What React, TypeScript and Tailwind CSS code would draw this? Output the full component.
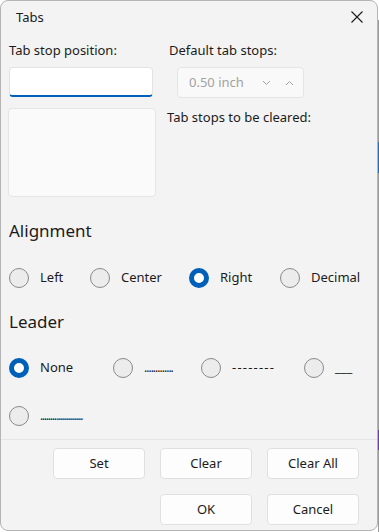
import React from "react";

function Radio({ checked }: { checked?: boolean }) {
  return checked ? (
    <span className="inline-block h-[20px] w-[20px] shrink-0 rounded-full border-[5px] border-[#005fb8] bg-white" />
  ) : (
    <span className="inline-block h-[20px] w-[20px] shrink-0 rounded-full border border-[#8a8a8a] bg-[#ececec]" />
  );
}

function Option({
  label,
  checked,
  className = "",
}: {
  label: React.ReactNode;
  checked?: boolean;
  className?: string;
}) {
  return (
    <div className={`flex items-center ${className}`}>
      <Radio checked={checked} />
      <span className="ml-[11px] text-[13px] text-[#1b1b1b]">{label}</span>
    </div>
  );
}

function Btn({ children }: { children: React.ReactNode }) {
  return (
    <button
      type="button"
      className="h-[31px] w-[92px] rounded-[4px] border border-[#e0e0e0] bg-[#fdfdfd] text-[13px] text-[#1b1b1b]"
    >
      {children}
    </button>
  );
}

export default function App() {
  return (
    <div className="flex h-[532px] w-[379px] bg-white font-['Segoe_UI','Noto_Sans',sans-serif]">
      <div className="flex h-[531px] w-[378px] flex-col overflow-hidden rounded-[8px] border border-[#b4b4b4] bg-[#f3f3f3]">
        {/* title bar */}
        <div className="flex h-[34px] shrink-0 items-center justify-between pl-[15px] pr-[14px]">
          <span className="text-[13px] text-[#1b1b1b]">Tabs</span>
          <svg width="12" height="12" viewBox="0 0 12 12" className="-mt-[3px]">
            <path d="M0.5 0.5 L11.5 11.5 M11.5 0.5 L0.5 11.5" stroke="#1b1b1b" strokeWidth="1.1" />
          </svg>
        </div>

        {/* top fields */}
        <div className="flex px-[7px] pt-[6px]">
          <div className="flex w-[158px] flex-col">
            <span className="pl-[1px] text-[13px] leading-[18px] text-[#1b1b1b]">Tab stop position:</span>
            <div className="ml-[1px] mt-[8px] h-[30px] w-[144px] rounded-[4px] border border-[#e3e3e3] border-b-2 border-b-[#005fb8] bg-white" />
            <div className="mt-[11px] h-[89px] w-[148px] rounded-[4px] border border-[#e5e5e5] bg-[#fafafa]" />
          </div>
          <div className="flex flex-col pl-[3px]">
            <span className="text-[13px] leading-[18px] text-[#1b1b1b]">Default tab stops:</span>
            <div className="ml-[8px] mt-[8px] flex h-[31px] w-[127px] items-center rounded-[4px] border border-[#e5e5e5] bg-[#f9f9f9] pl-[11px] pr-[9px]">
              <span className="flex-1 text-[13px] text-[#a2a2a2]">0.50 inch</span>
              <svg width="9" height="6" viewBox="0 0 9 6" className="mr-[14px]">
                <path d="M1 1 L4.5 4.5 L8 1" stroke="#a2a2a2" fill="none" strokeWidth="1" />
              </svg>
              <svg width="9" height="6" viewBox="0 0 9 6">
                <path d="M1 5 L4.5 1.5 L8 5" stroke="#a2a2a2" fill="none" strokeWidth="1" />
              </svg>
            </div>
            <span className="-ml-[2px] mt-[10px] text-[13px] leading-[18px] text-[#1b1b1b]">Tab stops to be cleared:</span>
          </div>
        </div>

        {/* alignment */}
        <div className="px-[8px]">
          <div className="mt-[23px] text-[17px] leading-[22px] text-[#1b1b1b]">Alignment</div>
          <div className="mt-[26px] flex items-center">
            <Option label="Left" checked={false} className="w-[81px]" />
            <Option label="Center" className="w-[99px]" />
            <Option label="Right" checked className="w-[91px]" />
            <Option label="Decimal" />
          </div>

          <div className="mt-[23px] text-[17px] leading-[22px] text-[#1b1b1b]">Leader</div>
          <div className="mt-[25px] flex items-center">
            <Option label="None" checked className="w-[104px]" />
            <Option label={<span className="text-[12px] tracking-[-1px]">.............</span>} className="w-[88px]" />
            <Option label={<span className="tracking-[1.2px]">--------</span>} className="w-[103px]" />
            <Option label="___" />
          </div>
          <div className="mt-[28px] flex items-center">
            <Option label={<span className="text-[12px] tracking-[-1.2px]">.....................</span>} />
          </div>
        </div>

        {/* footer */}
        <div className="mt-[13px] flex flex-1 flex-col border-t border-[#e5e5e5] pr-[18px]">
          <div className="mt-[8px] flex justify-end gap-[15px]">
            <Btn>Set</Btn>
            <Btn>Clear</Btn>
            <Btn>Clear All</Btn>
          </div>
          <div className="mt-[15px] flex justify-end gap-[15px]">
            <Btn>OK</Btn>
            <Btn>Cancel</Btn>
          </div>
        </div>
      </div>
      <div className="flex w-[1px] flex-col">
        <div className="h-[20px] bg-white" />
        <div className="h-[122px] bg-[#9a9a9a]" />
        <div className="h-[31px] bg-[#2a6fb5]" />
        <div className="h-[257px] bg-[#9a9a9a]" />
        <div className="h-[20px] bg-[#6b3fa0]" />
        <div className="flex-1 bg-[#9a9a9a]" />
      </div>
    </div>
  );
}
